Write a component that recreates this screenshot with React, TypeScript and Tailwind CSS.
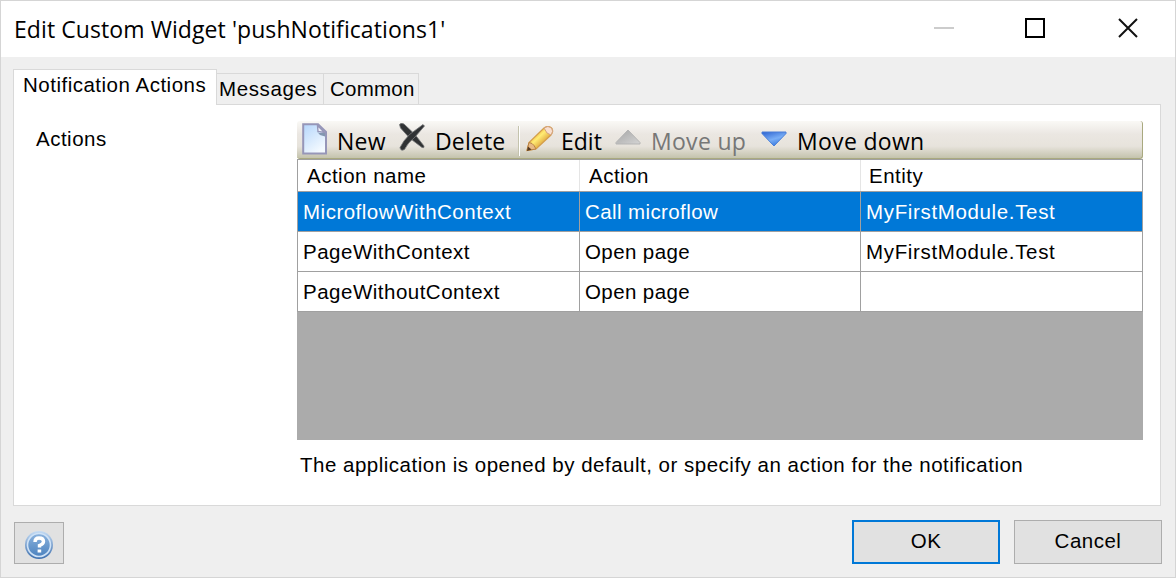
import type { ReactNode } from 'react';

const rows = [
  { name: 'MicroflowWithContext', action: 'Call microflow', entity: 'MyFirstModule.Test', selected: true },
  { name: 'PageWithContext', action: 'Open page', entity: 'MyFirstModule.Test', selected: false },
  { name: 'PageWithoutContext', action: 'Open page', entity: '', selected: false },
];

const uiFont = "font-['Open_Sans','Noto_Sans',sans-serif]";

function PageIcon() {
  return (
    <svg width="26" height="32" viewBox="0 0 26 32" className="shrink-0">
      <defs>
        <linearGradient id="page" x1="0" y1="0" x2="0.6" y2="1">
          <stop offset="0" stopColor="#b5d6fb" />
          <stop offset="1" stopColor="#f4faff" />
        </linearGradient>
      </defs>
      <path d="M1.200 1.200H16L24 9V30.500H1.200Z" fill="url(#page)" stroke="#9696b8" strokeWidth="2" />
      <path d="M14.500 8L17 10H23V13.500L18 12Z" fill="#8397b0" />
      <path d="M15.500 2.500L22.500 9.500L16 8.500Z" fill="#f1f4fa" stroke="#9696b8" strokeWidth="1.400" />
    </svg>
  );
}

function DeleteIcon() {
  return (
    <svg width="27" height="28" viewBox="0 0 27 28" className="shrink-0">
      <path d="M0.500 1.500Q2 -0.500 5 1L16 11.500L25 23Q25.500 25.500 23 24.500L10.500 15L1.500 5Z" fill="#303234" stroke="#77797a" strokeWidth="0.800" />
      <path d="M25.500 3L24 1.500L10.500 11.500Q4 18 1 24.500Q1.500 28.500 5.500 26.500Q8.500 20 16 14Z" fill="#303234" stroke="#77797a" strokeWidth="0.800" />
    </svg>
  );
}

function PencilIcon() {
  return (
    <svg width="28" height="27" viewBox="0 0 28 27" className="shrink-0">
      <defs>
        <linearGradient id="pencil" x1="0.25" y1="0.25" x2="0.7" y2="0.7">
          <stop offset="0" stopColor="#eca52c" />
          <stop offset="0.45" stopColor="#ffec74" />
          <stop offset="1" stopColor="#dda03a" />
        </linearGradient>
      </defs>
      <path d="M1 24.500L3 16.500L18 2Q22 -1 25.500 2Q28 5 25 9L10 23Z" fill="url(#pencil)" stroke="#d39d4b" strokeWidth="1.200" />
      <path d="M1 24.500L3 16.500L6 17.500L8 19.500L10 23Z" fill="#e8ba86" stroke="#b88145" />
      <path d="M1 25L2 20.500L5.500 23.500Z" fill="#543a24" />
      <path d="M18 2Q22 -1 25.500 2Q28 5 25 9L21 7Z" fill="#f8dfcf" stroke="#d3a27f" />
    </svg>
  );
}

function Triangle({ down }: { down?: boolean }) {
  return (
    <svg width="26" height="16" viewBox="0 0 26 16" className="shrink-0">
      <defs>
        <linearGradient id="up" x1="0" y1="0" x2="1" y2="1">
          <stop offset="0" stopColor="#a5a5a5" />
          <stop offset="1" stopColor="#d4d4d4" />
        </linearGradient>
        <linearGradient id="down" x1="0" y1="0" x2="0.5" y2="1">
          <stop offset="0" stopColor="#2c62d0" />
          <stop offset="0.6" stopColor="#79aef6" />
          <stop offset="1" stopColor="#3d7ee0" />
        </linearGradient>
      </defs>
      {down ? (
        <path d="M1 1H25V2.500L13 15L1 2.500Z" fill="url(#down)" stroke="#4a7fd8" />
      ) : (
        <path d="M1 15V13.500L13 1L25 13.500V15Z" fill="url(#up)" stroke="#b5b5b5" />
      )}
    </svg>
  );
}

function HelpIcon() {
  return (
    <svg width="30" height="30" viewBox="0 0 30 30">
      <defs>
        <linearGradient id="help" x1="0" y1="0" x2="0" y2="1">
          <stop offset="0" stopColor="#c5dcf4" />
          <stop offset="1" stopColor="#3d6fae" />
        </linearGradient>
        <linearGradient id="helpInner" x1="0" y1="0" x2="0" y2="1">
          <stop offset="0" stopColor="#8ab2dd" />
          <stop offset="1" stopColor="#4d83bf" />
        </linearGradient>
      </defs>
      <circle cx="15" cy="15" r="14" fill="url(#help)" />
      <circle cx="15" cy="15" r="11.500" fill="url(#helpInner)" stroke="#cfe2f6" strokeWidth="1.600" />
      <path d="M11 12Q11 8 15 8Q19.500 8 19.500 11.500Q19.500 14 15.500 15.500V17.500" fill="none" stroke="#fff" strokeWidth="3.400" />
      <rect x="13.600" y="19.500" width="3.600" height="3" fill="#fff" />
    </svg>
  );
}

function Tool({ children, className }: { children: ReactNode; className: string }) {
  return <button className={`flex shrink-0 whitespace-nowrap ${className}`}>{children}</button>;
}

export default function App() {
  return (
    <div className="flex h-[578px] w-[1176px] flex-col overflow-hidden border border-[#d5d5d5] bg-[#efefef] font-['Liberation_Sans',Arial,sans-serif] text-[20.5px] leading-6 tracking-[0.5px] text-black">
      <header className="flex h-14 shrink-0 items-center bg-white pl-[13px]">
        <h1 className={`${uiFont} w-[919px] whitespace-nowrap text-[23px] leading-8 tracking-[0.08px]`}>Edit Custom Widget 'pushNotifications1'</h1>
        <svg width="206" height="24" viewBox="0 0 206 24" fill="none" strokeWidth="2" className="mb-[2px]">
          <path d="M1 12H21" stroke="#ccc" />
          <rect x="93" y="3" width="18" height="18" stroke="#000" />
          <path d="M186 3L204 21M204 3L186 21" stroke="#111" />
        </svg>
      </header>

      <nav className="flex h-[47px] shrink-0 items-end pl-3">
        <div className="z-10 -mb-px h-9 w-[204px] whitespace-nowrap border border-b-0 border-[#d9d9d9] bg-white pl-[9px] pt-[3px]">Notification Actions</div>
        <div className="-mb-px h-8 w-[107px] border-y border-r border-[#d9d9d9] pl-[2px] pt-[3px] tracking-[0.6px]">Messages</div>
        <div className="-mb-px h-8 w-[95px] border-y border-r border-[#d9d9d9] pl-[6px] pt-[3px] tracking-[0.25px]">Common</div>
      </nav>

      <main className="mx-3 flex h-[402px] w-[1148px] shrink-0 border border-[#d9d9d9] bg-white pt-4">
        <div className="w-[283px] shrink-0 pl-[22px] pt-[6px]">Actions</div>
        <section className="w-[846px]">
          <div className={`${uiFont} flex h-[38px] rounded-[3px] border-b border-r border-[#a9a97f] bg-[linear-gradient(to_bottom,#faf9f6_0%,#ebe7e2_35%,#e7e3dc_68%,#c4c3ad_100%)] text-[23px] leading-8 tracking-[0.3px]`}>
            <Tool className="w-[97px] pl-[5px]">
              <span className="mt-[2px] w-[35px]"><PageIcon /></span><span className="mt-1">New</span>
            </Tool>
            <Tool className="w-[124px] pl-[5px]">
              <span className="mt-[2px] w-[36px]"><DeleteIcon /></span><span className="mt-1 tracking-[0.15px]">Delete</span>
            </Tool>
            <div className="mt-[5px] h-[30px] w-[2px] border-l border-r border-l-[#c4c3ad] border-r-white" />
            <Tool className="w-[95px] pl-[6px]">
              <span className="mt-[5px] w-[35px]"><PencilIcon /></span><span className="mt-1 tracking-[0px]">Edit</span>
            </Tool>
            <Tool className="w-[146px] text-[#777]">
              <span className="mt-2 w-[36px]"><Triangle /></span><span className="mt-1">Move up</span>
            </Tool>
            <Tool className="w-[170px]">
              <span className="mt-[10px] w-[36px]"><Triangle down /></span><span className="mt-1">Move down</span>
            </Tool>
          </div>
          <div className="h-[281px] bg-[#ababab]">
            <div className="h-[153px] border-l border-r border-t border-[#a0a0a0] bg-white">
              <div className="grid h-8 grid-cols-[282px_281px_281px] border-b border-[#a0a0a0]">
                <span className="border-r border-[#e5e5e5] pl-[9px] pt-1">Action name</span>
                <span className="border-r border-[#e5e5e5] pl-[9px] pt-1">Action</span>
                <span className="pl-2 pt-1">Entity</span>
              </div>
              {rows.map((row) => (
                <div key={row.name} className={`grid h-10 grid-cols-[282px_281px_281px] border-b border-[#a0a0a0] ${row.selected ? 'bg-[#0078d7] text-white' : 'bg-white'}`}>
                  <span className="border-r border-[#a0a0a0] pl-[5px] pt-2">{row.name}</span>
                  <span className="border-r border-[#a0a0a0] pl-[5px] pt-2 tracking-[0.4px]">{row.action}</span>
                  <span className="pl-[5px] pt-2 tracking-[0.65px]">{row.entity}</span>
                </div>
              ))}
            </div>
          </div>
          <p className="whitespace-nowrap pl-[3px] pt-[13px]">The application is opened by default, or specify an action for the notification</p>
        </section>
      </main>

      <footer className="flex pl-[13px] pt-[14px]">
        <button className="mt-[2px] flex h-[42px] w-[50px] items-center justify-center border border-[#adadad] bg-[#e1e1e1] pt-1">
          <HelpIcon />
        </button>
        <button className="ml-[788px] h-11 w-[148px] border-2 border-[#0078d7] bg-[#e1e1e1] pb-[2px]">OK</button>
        <button className="ml-[14px] h-11 w-[148px] border border-[#adadad] bg-[#e1e1e1] pb-[2px]">Cancel</button>
      </footer>
    </div>
  );
}
